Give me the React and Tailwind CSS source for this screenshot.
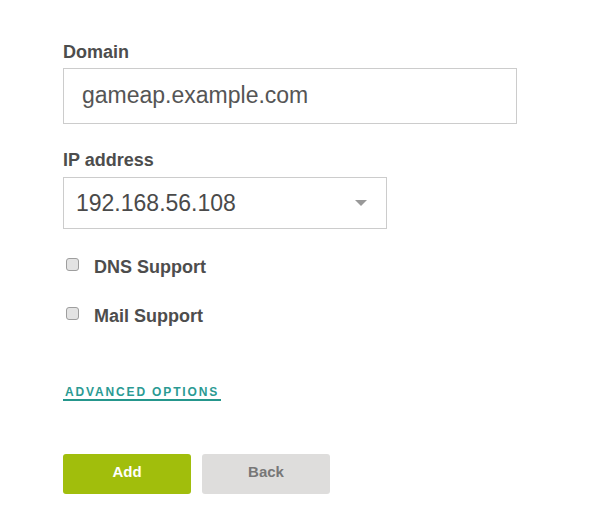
export default function App() {
  return (
    <div className="min-h-[526px] bg-white pl-[63px] pt-[42px] font-['Liberation_Sans',Arial,sans-serif]">
      <form className="w-[454px]">
        <label className="block text-[18px] font-bold leading-[20px] text-[#4d4d4d]">Domain</label>
        <div className="mt-[6px] flex h-[56px] w-[454px] items-center border border-[#cccccc] pb-[2px] pl-[18px] text-[23px] text-[#555555]">
          gameap.example.com
        </div>

        <label className="mt-[26px] block text-[18px] font-bold leading-[20px] text-[#4d4d4d]">IP address</label>
        <div className="mt-[7px] flex h-[52px] w-[324px] items-center justify-between border border-[#cccccc] pl-[12px] pr-[19px] text-[23px] text-[#4a4a4a]">
          <span>192.168.56.108</span>
          <span className="h-0 w-0 border-x-[6px] border-t-[6px] border-x-transparent border-t-[#999999]" />
        </div>

        <div className="mt-[28px] flex flex-col gap-[29px] pl-[3px]">
          <label className="flex items-center gap-[15px] text-[18px] font-bold leading-[20px] text-[#4d4d4d]">
            <span className="mb-[5px] h-[13px] w-[13px] rounded-[3px] border border-[#9e9e9e] bg-[#e3e3e3]" />
            DNS Support
          </label>
          <label className="flex items-center gap-[15px] text-[18px] font-bold leading-[20px] text-[#4d4d4d]">
            <span className="mb-[5px] h-[13px] w-[13px] rounded-[3px] border border-[#9e9e9e] bg-[#e3e3e3]" />
            Mail Support
          </label>
        </div>

        <div className="mt-[53px]">
          <span className="inline-block border-b-2 border-[#25968c] pl-[2px] pr-[2px] text-[12px] font-bold uppercase leading-[14px] tracking-[1.85px] text-[#2a9a93]">
            Advanced options
          </span>
        </div>

        <div className="mt-[51px] flex gap-[11px]">
          <button type="button" className="h-[40px] w-[128px] rounded-[3px] bg-[#a1be0c] pb-[3px] text-[15px] font-bold text-white">
            Add
          </button>
          <button type="button" className="h-[40px] w-[128px] rounded-[3px] bg-[#dedddc] pb-[3px] text-[15px] font-bold text-[#777777]">
            Back
          </button>
        </div>
      </form>
    </div>
  );
}
